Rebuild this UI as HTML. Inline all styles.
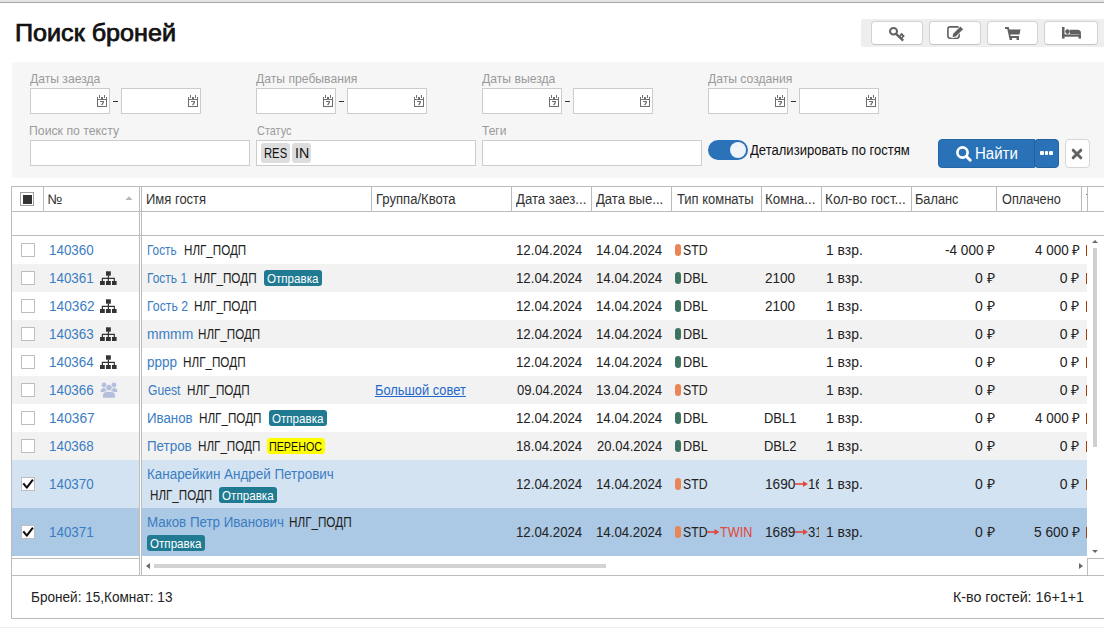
<!DOCTYPE html>
<html><head><meta charset="utf-8"><title>Поиск броней</title><style>
html,body{margin:0;padding:0;}
body{width:1104px;height:628px;overflow:hidden;position:relative;background:#fff;font-family:"Liberation Sans", sans-serif;}
body>div,body>svg{position:absolute;}
.t{white-space:nowrap;}
</style></head>
<body>
<div style="left:0px;top:0px;width:1104px;height:2px;background:#e4e4e4"></div>
<div style="left:0px;top:2px;width:1104px;height:1px;background:#a9a9a9"></div>
<div class="t" style="left:15.41px;top:21.53px;font-size:23px;line-height:23px;color:#111;font-weight:normal;-webkit-text-stroke:0.75px #111;transform:scaleX(1.0931);transform-origin:0 0;">Поиск броней</div>
<div style="left:861px;top:19px;width:243px;height:28px;background:#eeeeee;border-radius:2px 0 0 2px"></div>
<div style="left:871px;top:21px;width:52px;height:24px;background:#fff;border:1px solid #d2d2d2;border-bottom-color:#c4c4c4;border-radius:4px;box-sizing:border-box"></div>
<div style="left:929px;top:21px;width:52px;height:24px;background:#fff;border:1px solid #d2d2d2;border-bottom-color:#c4c4c4;border-radius:4px;box-sizing:border-box"></div>
<div style="left:987px;top:21px;width:51px;height:24px;background:#fff;border:1px solid #d2d2d2;border-bottom-color:#c4c4c4;border-radius:4px;box-sizing:border-box"></div>
<div style="left:1044px;top:21px;width:54px;height:24px;background:#fff;border:1px solid #d2d2d2;border-bottom-color:#c4c4c4;border-radius:4px;box-sizing:border-box"></div>
<svg style="left:887px;top:24px" width="20" height="20" viewBox="0 0 20 20">
<ellipse cx="6.5" cy="7.2" rx="3.5" ry="3.3" fill="none" stroke="#606060" stroke-width="2"/>
<path d="M8.8 9.6 L16.2 16.6" stroke="#606060" stroke-width="2.2"/>
<path d="M13.9 9.4 L17.2 12.6" stroke="#606060" stroke-width="1.8"/><path d="M12.6 12.4 L14.6 10.4 M14.4 14.2 L16.4 12.2" stroke="#606060" stroke-width="1.6"/>
</svg>
<svg style="left:945px;top:24px" width="20" height="18" viewBox="0 0 20 18">
<rect x="2.9" y="2.9" width="11.2" height="11.4" rx="2.2" fill="none" stroke="#606060" stroke-width="1.6"/>
<path d="M6.8 13.8 L7.64 9.84 L15.44 2.04 L18.56 5.16 L10.76 12.96 Z" fill="#606060" stroke="#fff" stroke-width="1"/>
</svg>
<svg style="left:1005px;top:27px" width="16" height="13" viewBox="0 0 16 13">
<path d="M0 1 H3 L5 10 H14" fill="none" stroke="#606060" stroke-width="1.8"/>
<path d="M3.6 2.5 H15.5 L14.5 7.5 H4.6 Z" fill="#606060"/>
<rect x="4.5" y="10" width="2.5" height="3" fill="#606060"/>
<rect x="11.5" y="10" width="2.5" height="3" fill="#606060"/>
</svg>
<svg style="left:1062px;top:27px" width="19" height="12" viewBox="0 0 19 12">
<rect x="0" y="0" width="2.5" height="11.6" fill="#606060"/>
<rect x="0" y="7.4" width="19" height="2.3" fill="#606060"/>
<rect x="16.5" y="7.4" width="2.5" height="4.2" fill="#606060"/>
<circle cx="5.5" cy="4.6" r="2.3" fill="#606060"/>
<path d="M8 2.7 H15.5 Q19 2.7 19 6.2 V6.9 H8 Z" fill="#606060"/>
</svg>
<div style="left:12px;top:62px;width:1092px;height:116px;background:#f6f6f6;border-radius:3px 0 0 3px"></div>
<div class="t" style="left:30.00px;top:72.00px;font-size:13px;line-height:13px;color:#9a9a9a;font-weight:normal;;transform:scaleX(0.9333);transform-origin:0 0;">Даты заезда</div>
<div style="left:30px;top:88px;width:80px;height:26px;background:#fff;border:1px solid #cccccc;box-sizing:border-box"></div>
<svg style="left:97px;top:95px" width="10" height="12" viewBox="0 0 10 12" shape-rendering="crispEdges" fill="#6e6e6e">
<rect x="0" y="2" width="1" height="10"/><rect x="9" y="2" width="1" height="10"/>
<rect x="0" y="4" width="10" height="1"/><rect x="0" y="11" width="10" height="1"/>
<rect x="2" y="0" width="1" height="3"/><rect x="7" y="0" width="1" height="3"/><rect x="4" y="2" width="2" height="2"/>
<rect x="3" y="6" width="4" height="1"/>
</svg><svg style="left:97px;top:95px" width="10" height="12" viewBox="0 0 10 12"><path d="M6.6 7 L4.6 10.2" stroke="#6e6e6e" stroke-width="1.3"/></svg>
<div style="left:121px;top:88px;width:80px;height:26px;background:#fff;border:1px solid #cccccc;box-sizing:border-box"></div>
<svg style="left:188px;top:95px" width="10" height="12" viewBox="0 0 10 12" shape-rendering="crispEdges" fill="#6e6e6e">
<rect x="0" y="2" width="1" height="10"/><rect x="9" y="2" width="1" height="10"/>
<rect x="0" y="4" width="10" height="1"/><rect x="0" y="11" width="10" height="1"/>
<rect x="2" y="0" width="1" height="3"/><rect x="7" y="0" width="1" height="3"/><rect x="4" y="2" width="2" height="2"/>
<rect x="3" y="6" width="4" height="1"/>
</svg><svg style="left:188px;top:95px" width="10" height="12" viewBox="0 0 10 12"><path d="M6.6 7 L4.6 10.2" stroke="#6e6e6e" stroke-width="1.3"/></svg>
<div style="left:113px;top:101px;width:5px;height:1px;background:#333"></div>
<div class="t" style="left:256.40px;top:72.00px;font-size:13px;line-height:13px;color:#9a9a9a;font-weight:normal;;transform:scaleX(0.9352);transform-origin:0 0;">Даты пребывания</div>
<div style="left:256px;top:88px;width:80px;height:26px;background:#fff;border:1px solid #cccccc;box-sizing:border-box"></div>
<svg style="left:323px;top:95px" width="10" height="12" viewBox="0 0 10 12" shape-rendering="crispEdges" fill="#6e6e6e">
<rect x="0" y="2" width="1" height="10"/><rect x="9" y="2" width="1" height="10"/>
<rect x="0" y="4" width="10" height="1"/><rect x="0" y="11" width="10" height="1"/>
<rect x="2" y="0" width="1" height="3"/><rect x="7" y="0" width="1" height="3"/><rect x="4" y="2" width="2" height="2"/>
<rect x="3" y="6" width="4" height="1"/>
</svg><svg style="left:323px;top:95px" width="10" height="12" viewBox="0 0 10 12"><path d="M6.6 7 L4.6 10.2" stroke="#6e6e6e" stroke-width="1.3"/></svg>
<div style="left:347px;top:88px;width:80px;height:26px;background:#fff;border:1px solid #cccccc;box-sizing:border-box"></div>
<svg style="left:414px;top:95px" width="10" height="12" viewBox="0 0 10 12" shape-rendering="crispEdges" fill="#6e6e6e">
<rect x="0" y="2" width="1" height="10"/><rect x="9" y="2" width="1" height="10"/>
<rect x="0" y="4" width="10" height="1"/><rect x="0" y="11" width="10" height="1"/>
<rect x="2" y="0" width="1" height="3"/><rect x="7" y="0" width="1" height="3"/><rect x="4" y="2" width="2" height="2"/>
<rect x="3" y="6" width="4" height="1"/>
</svg><svg style="left:414px;top:95px" width="10" height="12" viewBox="0 0 10 12"><path d="M6.6 7 L4.6 10.2" stroke="#6e6e6e" stroke-width="1.3"/></svg>
<div style="left:339px;top:101px;width:5px;height:1px;background:#333"></div>
<div class="t" style="left:482.40px;top:72.00px;font-size:13px;line-height:13px;color:#9a9a9a;font-weight:normal;;transform:scaleX(0.9359);transform-origin:0 0;">Даты выезда</div>
<div style="left:482px;top:88px;width:80px;height:26px;background:#fff;border:1px solid #cccccc;box-sizing:border-box"></div>
<svg style="left:549px;top:95px" width="10" height="12" viewBox="0 0 10 12" shape-rendering="crispEdges" fill="#6e6e6e">
<rect x="0" y="2" width="1" height="10"/><rect x="9" y="2" width="1" height="10"/>
<rect x="0" y="4" width="10" height="1"/><rect x="0" y="11" width="10" height="1"/>
<rect x="2" y="0" width="1" height="3"/><rect x="7" y="0" width="1" height="3"/><rect x="4" y="2" width="2" height="2"/>
<rect x="3" y="6" width="4" height="1"/>
</svg><svg style="left:549px;top:95px" width="10" height="12" viewBox="0 0 10 12"><path d="M6.6 7 L4.6 10.2" stroke="#6e6e6e" stroke-width="1.3"/></svg>
<div style="left:573px;top:88px;width:80px;height:26px;background:#fff;border:1px solid #cccccc;box-sizing:border-box"></div>
<svg style="left:640px;top:95px" width="10" height="12" viewBox="0 0 10 12" shape-rendering="crispEdges" fill="#6e6e6e">
<rect x="0" y="2" width="1" height="10"/><rect x="9" y="2" width="1" height="10"/>
<rect x="0" y="4" width="10" height="1"/><rect x="0" y="11" width="10" height="1"/>
<rect x="2" y="0" width="1" height="3"/><rect x="7" y="0" width="1" height="3"/><rect x="4" y="2" width="2" height="2"/>
<rect x="3" y="6" width="4" height="1"/>
</svg><svg style="left:640px;top:95px" width="10" height="12" viewBox="0 0 10 12"><path d="M6.6 7 L4.6 10.2" stroke="#6e6e6e" stroke-width="1.3"/></svg>
<div style="left:565px;top:101px;width:5px;height:1px;background:#333"></div>
<div class="t" style="left:708.00px;top:72.00px;font-size:13px;line-height:13px;color:#9a9a9a;font-weight:normal;;transform:scaleX(0.9333);transform-origin:0 0;">Даты создания</div>
<div style="left:708px;top:88px;width:80px;height:26px;background:#fff;border:1px solid #cccccc;box-sizing:border-box"></div>
<svg style="left:775px;top:95px" width="10" height="12" viewBox="0 0 10 12" shape-rendering="crispEdges" fill="#6e6e6e">
<rect x="0" y="2" width="1" height="10"/><rect x="9" y="2" width="1" height="10"/>
<rect x="0" y="4" width="10" height="1"/><rect x="0" y="11" width="10" height="1"/>
<rect x="2" y="0" width="1" height="3"/><rect x="7" y="0" width="1" height="3"/><rect x="4" y="2" width="2" height="2"/>
<rect x="3" y="6" width="4" height="1"/>
</svg><svg style="left:775px;top:95px" width="10" height="12" viewBox="0 0 10 12"><path d="M6.6 7 L4.6 10.2" stroke="#6e6e6e" stroke-width="1.3"/></svg>
<div style="left:799px;top:88px;width:80px;height:26px;background:#fff;border:1px solid #cccccc;box-sizing:border-box"></div>
<svg style="left:866px;top:95px" width="10" height="12" viewBox="0 0 10 12" shape-rendering="crispEdges" fill="#6e6e6e">
<rect x="0" y="2" width="1" height="10"/><rect x="9" y="2" width="1" height="10"/>
<rect x="0" y="4" width="10" height="1"/><rect x="0" y="11" width="10" height="1"/>
<rect x="2" y="0" width="1" height="3"/><rect x="7" y="0" width="1" height="3"/><rect x="4" y="2" width="2" height="2"/>
<rect x="3" y="6" width="4" height="1"/>
</svg><svg style="left:866px;top:95px" width="10" height="12" viewBox="0 0 10 12"><path d="M6.6 7 L4.6 10.2" stroke="#6e6e6e" stroke-width="1.3"/></svg>
<div style="left:791px;top:101px;width:5px;height:1px;background:#333"></div>
<div class="t" style="left:29.06px;top:124.00px;font-size:13px;line-height:13px;color:#9a9a9a;font-weight:normal;;transform:scaleX(0.9432);transform-origin:0 0;">Поиск по тексту</div>
<div style="left:30px;top:140px;width:220px;height:26px;background:#fff;border:1px solid #cccccc;box-sizing:border-box"></div>
<div class="t" style="left:256.60px;top:124.00px;font-size:13px;line-height:13px;color:#9a9a9a;font-weight:normal;;transform:scaleX(0.8390);transform-origin:0 0;">Статус</div>
<div style="left:256px;top:140px;width:220px;height:26px;background:#fff;border:1px solid #cccccc;box-sizing:border-box"></div>
<div class="t" style="left:482.00px;top:124.00px;font-size:13px;line-height:13px;color:#9a9a9a;font-weight:normal;;transform:scaleX(0.9231);transform-origin:0 0;">Теги</div>
<div style="left:482px;top:140px;width:220px;height:26px;background:#fff;border:1px solid #cccccc;box-sizing:border-box"></div>
<div style="left:261px;top:143px;width:29px;height:20px;background:#dddddd;border-radius:3px"></div>
<div style="left:292px;top:143px;width:19px;height:20px;background:#dddddd;border-radius:3px"></div>
<div class="t" style="left:263.70px;top:146.15px;font-size:14px;line-height:14px;color:#111;font-weight:normal;;transform:scaleX(0.8036);transform-origin:0 0;">RES</div>
<div class="t" style="left:294.78px;top:146.15px;font-size:14px;line-height:14px;color:#111;font-weight:normal;;transform:scaleX(1.0167);transform-origin:0 0;">IN</div>
<div style="left:708px;top:140px;width:40px;height:20px;background:#2b72b8;border-radius:10px"></div>
<div style="left:730px;top:142px;width:16px;height:16px;background:#eef4fa;border-radius:50%"></div>
<div class="t" style="left:750.00px;top:143.15px;font-size:14px;line-height:14px;color:#111;font-weight:normal;;transform:scaleX(0.9322);transform-origin:0 0;">Детализировать по гостям</div>
<div style="left:938px;top:139px;width:97px;height:29px;background:#2a72b8;border-radius:4px 0 0 4px;border:1px solid #2566a6;box-sizing:border-box"></div>
<div style="left:1034px;top:139px;width:25px;height:29px;background:#2a72b8;border-radius:4px;border:1px solid #2360a0;box-sizing:border-box"></div>
<svg style="left:956px;top:146px" width="17" height="17" viewBox="0 0 17 17">
<circle cx="6.5" cy="6.5" r="5.1" fill="none" stroke="#fff" stroke-width="2.7"/>
<path d="M10.3 10.3 L14.2 14.2" stroke="#fff" stroke-width="3" stroke-linecap="round"/>
</svg>
<div class="t" style="left:974.76px;top:145.66px;font-size:16px;line-height:16px;color:#fff;font-weight:normal;;transform:scaleX(0.9386);transform-origin:0 0;">Найти</div>
<div style="left:1040.0px;top:151.2px;width:3.8px;height:3.6px;background:#fff;border-radius:1px"></div>
<div style="left:1044.6px;top:151.2px;width:3.8px;height:3.6px;background:#fff;border-radius:1px"></div>
<div style="left:1049.2px;top:151.2px;width:3.8px;height:3.6px;background:#fff;border-radius:1px"></div>
<div style="left:1065px;top:139px;width:25px;height:29px;background:#fff;border:1px solid #d6d6d6;border-radius:4px;box-sizing:border-box"></div>
<svg style="left:1071px;top:148px" width="12" height="12" viewBox="0 0 12 12">
<path d="M2.2 2.2 L9.8 9.8 M9.8 2.2 L2.2 9.8" stroke="#626262" stroke-width="3" stroke-linecap="round"/>
</svg>
<div style="left:11px;top:186px;width:1093px;height:1px;background:#bcbcbc"></div>
<div style="left:11px;top:186px;width:1px;height:433px;background:#bcbcbc"></div>
<div style="left:11px;top:618px;width:1093px;height:1px;background:#bcbcbc"></div>
<div style="left:11px;top:211px;width:1093px;height:1px;background:#bcbcbc"></div>
<div style="left:11px;top:235px;width:1093px;height:1px;background:#bcbcbc"></div>
<div style="left:11px;top:575px;width:1093px;height:1px;background:#bcbcbc"></div>
<div style="left:43px;top:186px;width:1px;height:25px;background:#bcbcbc"></div>
<div style="left:371px;top:186px;width:1px;height:25px;background:#bcbcbc"></div>
<div style="left:511px;top:186px;width:1px;height:25px;background:#bcbcbc"></div>
<div style="left:591px;top:186px;width:1px;height:25px;background:#bcbcbc"></div>
<div style="left:671px;top:186px;width:1px;height:25px;background:#bcbcbc"></div>
<div style="left:761px;top:186px;width:1px;height:25px;background:#bcbcbc"></div>
<div style="left:821px;top:186px;width:1px;height:25px;background:#bcbcbc"></div>
<div style="left:911px;top:186px;width:1px;height:25px;background:#bcbcbc"></div>
<div style="left:996px;top:186px;width:1px;height:25px;background:#bcbcbc"></div>
<div style="left:1081px;top:186px;width:1px;height:25px;background:#bcbcbc"></div>
<div style="left:1087px;top:186px;width:1px;height:25px;background:#bcbcbc"></div>
<div style="left:139px;top:186px;width:1px;height:389px;background:#bcbcbc"></div>
<div style="left:141px;top:186px;width:1px;height:389px;background:#bcbcbc"></div>
<div class="t" style="left:47.50px;top:192.15px;font-size:14px;line-height:14px;color:#333;font-weight:normal;;">№</div>
<div class="t" style="left:145.57px;top:192.15px;font-size:14px;line-height:14px;color:#333;font-weight:normal;;transform:scaleX(0.9286);transform-origin:0 0;">Имя гостя</div>
<div class="t" style="left:375.77px;top:192.15px;font-size:14px;line-height:14px;color:#333;font-weight:normal;;transform:scaleX(0.9341);transform-origin:0 0;">Группа/Квота</div>
<div class="t" style="left:515.80px;top:192.15px;font-size:14px;line-height:14px;color:#333;font-weight:normal;;transform:scaleX(0.9419);transform-origin:0 0;">Дата заез...</div>
<div class="t" style="left:596.20px;top:192.15px;font-size:14px;line-height:14px;color:#333;font-weight:normal;;transform:scaleX(0.9352);transform-origin:0 0;">Дата вые...</div>
<div class="t" style="left:676.80px;top:192.15px;font-size:14px;line-height:14px;color:#333;font-weight:normal;;transform:scaleX(0.9268);transform-origin:0 0;">Тип комнаты</div>
<div class="t" style="left:765.44px;top:192.15px;font-size:14px;line-height:14px;color:#333;font-weight:normal;;transform:scaleX(0.9569);transform-origin:0 0;">Комна...</div>
<div class="t" style="left:825.43px;top:192.15px;font-size:14px;line-height:14px;color:#333;font-weight:normal;;transform:scaleX(0.9683);transform-origin:0 0;">Кол-во гост...</div>
<div class="t" style="left:915.49px;top:192.15px;font-size:14px;line-height:14px;color:#333;font-weight:normal;;transform:scaleX(0.9109);transform-origin:0 0;">Баланс</div>
<div class="t" style="left:1001.50px;top:192.15px;font-size:14px;line-height:14px;color:#333;font-weight:normal;;transform:scaleX(0.9077);transform-origin:0 0;">Оплачено</div>
<svg style="left:125px;top:195.6px" width="8" height="4.4" viewBox="0 0 8 4.4"><path d="M0 4.4 L4 0.3 L8 4.4 Z" fill="#b8b8b8"/></svg>
<div style="left:1086px;top:194px;width:1px;height:1px;background:#b06030"></div>
<div style="left:20px;top:192px;width:14px;height:14px;background:#fff;border:1px solid #a0a0a0;box-sizing:border-box"></div>
<div style="left:22.5px;top:194.5px;width:9px;height:9px;background:#333"></div>
<div style="left:21px;top:243px;width:14px;height:14px;background:#fff;border:1px solid #bdbdbd;box-sizing:border-box"></div>
<div class="t" style="left:49.04px;top:243.15px;font-size:14px;line-height:14px;color:#3a7dc2;font-weight:normal;;transform:scaleX(0.9565);transform-origin:0 0;">140360</div>
<div class="t" style="left:146.76px;top:243.15px;font-size:14px;line-height:14px;color:#3a7dc2;font-weight:normal;;transform:scaleX(0.8412);transform-origin:0 0;">Гость</div>
<div class="t" style="left:183.57px;top:243.15px;font-size:14px;line-height:14px;color:#222;font-weight:normal;;transform:scaleX(0.8301);transform-origin:0 0;">НЛГ_ПОДП</div>
<div class="t" style="left:515.86px;top:243.15px;font-size:14px;line-height:14px;color:#222;font-weight:normal;;transform:scaleX(0.9449);transform-origin:0 0;">12.04.2024</div>
<div class="t" style="left:595.86px;top:243.15px;font-size:14px;line-height:14px;color:#222;font-weight:normal;;transform:scaleX(0.9449);transform-origin:0 0;">14.04.2024</div>
<div style="left:675px;top:244px;width:6px;height:12px;background:#ea8558;border-radius:3px"></div>
<div class="t" style="left:682.93px;top:243.15px;font-size:14px;line-height:14px;color:#222;font-weight:normal;;transform:scaleX(0.8741);transform-origin:0 0;">STD</div>
<div class="t" style="left:826.01px;top:243.15px;font-size:14px;line-height:14px;color:#222;font-weight:normal;;transform:scaleX(0.9914);transform-origin:0 0;">1 взр.</div>
<div class="t" style="left:944.67px;top:243.15px;font-size:14px;line-height:14px;color:#222;font-weight:normal;;transform:scaleX(0.9692);transform-origin:0 0;">-4 000 ₽</div>
<div class="t" style="left:1034.66px;top:243.15px;font-size:14px;line-height:14px;color:#222;font-weight:normal;;transform:scaleX(0.9596);transform-origin:0 0;">4 000 ₽</div>
<div style="left:1085.6px;top:245px;width:1.4px;height:10.5px;background:#a2400c"></div>
<div style="left:12px;top:264px;width:127px;height:28px;background:#f2f2f2"></div>
<div style="left:142px;top:264px;width:945px;height:28px;background:#f2f2f2"></div>
<div style="left:21px;top:271px;width:14px;height:14px;background:#fff;border:1px solid #bdbdbd;box-sizing:border-box"></div>
<div class="t" style="left:49.04px;top:271.15px;font-size:14px;line-height:14px;color:#3a7dc2;font-weight:normal;;transform:scaleX(0.9565);transform-origin:0 0;">140361</div>
<svg style="left:100px;top:271px" width="17" height="15" viewBox="0 0 17 15">
<rect x="6" y="0.3" width="4.8" height="4.4" fill="#333"/>
<path d="M8.4 4.5 V10 M2.4 10 V7.3 H14.3 V10" fill="none" stroke="#333" stroke-width="1.2"/>
<rect x="0" y="10" width="4.8" height="4" fill="#333"/>
<rect x="6" y="10" width="4.8" height="4" fill="#333"/>
<rect x="12" y="10" width="4.6" height="4" fill="#333"/>
</svg>
<div class="t" style="left:146.74px;top:271.15px;font-size:14px;line-height:14px;color:#3a7dc2;font-weight:normal;;transform:scaleX(0.8565);transform-origin:0 0;">Гость 1</div>
<div class="t" style="left:194.16px;top:271.15px;font-size:14px;line-height:14px;color:#222;font-weight:normal;;transform:scaleX(0.8356);transform-origin:0 0;">НЛГ_ПОДП</div>
<div style="left:264px;top:270px;width:57.69999999999999px;height:16px;background:#1f7a92;border-radius:3px"></div>
<div class="t" style="left:267.00px;top:272.00px;font-size:13px;line-height:13px;color:#fff;font-weight:normal;;transform:scaleX(0.8914);transform-origin:0 0;">Отправка</div>
<div class="t" style="left:515.86px;top:271.15px;font-size:14px;line-height:14px;color:#222;font-weight:normal;;transform:scaleX(0.9449);transform-origin:0 0;">12.04.2024</div>
<div class="t" style="left:595.86px;top:271.15px;font-size:14px;line-height:14px;color:#222;font-weight:normal;;transform:scaleX(0.9449);transform-origin:0 0;">14.04.2024</div>
<div style="left:675px;top:272px;width:6px;height:12px;background:#3b7462;border-radius:3px"></div>
<div class="t" style="left:682.89px;top:271.15px;font-size:14px;line-height:14px;color:#222;font-weight:normal;;transform:scaleX(0.9077);transform-origin:0 0;">DBL</div>
<div class="t" style="left:765.30px;top:271.15px;font-size:14px;line-height:14px;color:#222;font-weight:normal;;transform:scaleX(0.9677);transform-origin:0 0;">2100</div>
<div class="t" style="left:826.01px;top:271.15px;font-size:14px;line-height:14px;color:#222;font-weight:normal;;transform:scaleX(0.9914);transform-origin:0 0;">1 взр.</div>
<div class="t" style="left:975.10px;top:271.15px;font-size:14px;line-height:14px;color:#222;font-weight:normal;;">0 ₽</div>
<div class="t" style="left:1059.80px;top:271.15px;font-size:14px;line-height:14px;color:#222;font-weight:normal;;">0 ₽</div>
<div style="left:1085.6px;top:273px;width:1.4px;height:10.5px;background:#a2400c"></div>
<div style="left:21px;top:299px;width:14px;height:14px;background:#fff;border:1px solid #bdbdbd;box-sizing:border-box"></div>
<div class="t" style="left:49.02px;top:299.15px;font-size:14px;line-height:14px;color:#3a7dc2;font-weight:normal;;transform:scaleX(0.9778);transform-origin:0 0;">140362</div>
<svg style="left:100px;top:299px" width="17" height="15" viewBox="0 0 17 15">
<rect x="6" y="0.3" width="4.8" height="4.4" fill="#333"/>
<path d="M8.4 4.5 V10 M2.4 10 V7.3 H14.3 V10" fill="none" stroke="#333" stroke-width="1.2"/>
<rect x="0" y="10" width="4.8" height="4" fill="#333"/>
<rect x="6" y="10" width="4.8" height="4" fill="#333"/>
<rect x="12" y="10" width="4.6" height="4" fill="#333"/>
</svg>
<div class="t" style="left:146.72px;top:299.15px;font-size:14px;line-height:14px;color:#3a7dc2;font-weight:normal;;transform:scaleX(0.8756);transform-origin:0 0;">Гость 2</div>
<div class="t" style="left:194.16px;top:299.15px;font-size:14px;line-height:14px;color:#222;font-weight:normal;;transform:scaleX(0.8356);transform-origin:0 0;">НЛГ_ПОДП</div>
<div class="t" style="left:515.86px;top:299.15px;font-size:14px;line-height:14px;color:#222;font-weight:normal;;transform:scaleX(0.9449);transform-origin:0 0;">12.04.2024</div>
<div class="t" style="left:595.86px;top:299.15px;font-size:14px;line-height:14px;color:#222;font-weight:normal;;transform:scaleX(0.9449);transform-origin:0 0;">14.04.2024</div>
<div style="left:675px;top:300px;width:6px;height:12px;background:#3b7462;border-radius:3px"></div>
<div class="t" style="left:682.89px;top:299.15px;font-size:14px;line-height:14px;color:#222;font-weight:normal;;transform:scaleX(0.9077);transform-origin:0 0;">DBL</div>
<div class="t" style="left:765.30px;top:299.15px;font-size:14px;line-height:14px;color:#222;font-weight:normal;;transform:scaleX(0.9677);transform-origin:0 0;">2100</div>
<div class="t" style="left:826.01px;top:299.15px;font-size:14px;line-height:14px;color:#222;font-weight:normal;;transform:scaleX(0.9914);transform-origin:0 0;">1 взр.</div>
<div class="t" style="left:975.10px;top:299.15px;font-size:14px;line-height:14px;color:#222;font-weight:normal;;">0 ₽</div>
<div class="t" style="left:1059.80px;top:299.15px;font-size:14px;line-height:14px;color:#222;font-weight:normal;;">0 ₽</div>
<div style="left:1085.6px;top:301px;width:1.4px;height:10.5px;background:#a2400c"></div>
<div style="left:12px;top:320px;width:127px;height:28px;background:#f2f2f2"></div>
<div style="left:142px;top:320px;width:945px;height:28px;background:#f2f2f2"></div>
<div style="left:21px;top:327px;width:14px;height:14px;background:#fff;border:1px solid #bdbdbd;box-sizing:border-box"></div>
<div class="t" style="left:49.04px;top:327.15px;font-size:14px;line-height:14px;color:#3a7dc2;font-weight:normal;;transform:scaleX(0.9565);transform-origin:0 0;">140363</div>
<svg style="left:100px;top:327px" width="17" height="15" viewBox="0 0 17 15">
<rect x="6" y="0.3" width="4.8" height="4.4" fill="#333"/>
<path d="M8.4 4.5 V10 M2.4 10 V7.3 H14.3 V10" fill="none" stroke="#333" stroke-width="1.2"/>
<rect x="0" y="10" width="4.8" height="4" fill="#333"/>
<rect x="6" y="10" width="4.8" height="4" fill="#333"/>
<rect x="12" y="10" width="4.6" height="4" fill="#333"/>
</svg>
<div class="t" style="left:146.71px;top:327.15px;font-size:14px;line-height:14px;color:#3a7dc2;font-weight:normal;;transform:scaleX(0.9911);transform-origin:0 0;">mmmm</div>
<div class="t" style="left:198.47px;top:327.15px;font-size:14px;line-height:14px;color:#222;font-weight:normal;;transform:scaleX(0.8315);transform-origin:0 0;">НЛГ_ПОДП</div>
<div class="t" style="left:515.86px;top:327.15px;font-size:14px;line-height:14px;color:#222;font-weight:normal;;transform:scaleX(0.9449);transform-origin:0 0;">12.04.2024</div>
<div class="t" style="left:595.86px;top:327.15px;font-size:14px;line-height:14px;color:#222;font-weight:normal;;transform:scaleX(0.9449);transform-origin:0 0;">14.04.2024</div>
<div style="left:675px;top:328px;width:6px;height:12px;background:#3b7462;border-radius:3px"></div>
<div class="t" style="left:682.89px;top:327.15px;font-size:14px;line-height:14px;color:#222;font-weight:normal;;transform:scaleX(0.9077);transform-origin:0 0;">DBL</div>
<div class="t" style="left:826.01px;top:327.15px;font-size:14px;line-height:14px;color:#222;font-weight:normal;;transform:scaleX(0.9914);transform-origin:0 0;">1 взр.</div>
<div class="t" style="left:975.10px;top:327.15px;font-size:14px;line-height:14px;color:#222;font-weight:normal;;">0 ₽</div>
<div class="t" style="left:1059.80px;top:327.15px;font-size:14px;line-height:14px;color:#222;font-weight:normal;;">0 ₽</div>
<div style="left:1085.6px;top:329px;width:1.4px;height:10.5px;background:#a2400c"></div>
<div style="left:21px;top:355px;width:14px;height:14px;background:#fff;border:1px solid #bdbdbd;box-sizing:border-box"></div>
<div class="t" style="left:49.04px;top:355.15px;font-size:14px;line-height:14px;color:#3a7dc2;font-weight:normal;;transform:scaleX(0.9565);transform-origin:0 0;">140364</div>
<svg style="left:100px;top:355px" width="17" height="15" viewBox="0 0 17 15">
<rect x="6" y="0.3" width="4.8" height="4.4" fill="#333"/>
<path d="M8.4 4.5 V10 M2.4 10 V7.3 H14.3 V10" fill="none" stroke="#333" stroke-width="1.2"/>
<rect x="0" y="10" width="4.8" height="4" fill="#333"/>
<rect x="6" y="10" width="4.8" height="4" fill="#333"/>
<rect x="12" y="10" width="4.6" height="4" fill="#333"/>
</svg>
<div class="t" style="left:146.73px;top:355.15px;font-size:14px;line-height:14px;color:#3a7dc2;font-weight:normal;;transform:scaleX(0.9667);transform-origin:0 0;">pppp</div>
<div class="t" style="left:183.46px;top:355.15px;font-size:14px;line-height:14px;color:#222;font-weight:normal;;transform:scaleX(0.8356);transform-origin:0 0;">НЛГ_ПОДП</div>
<div class="t" style="left:515.86px;top:355.15px;font-size:14px;line-height:14px;color:#222;font-weight:normal;;transform:scaleX(0.9449);transform-origin:0 0;">12.04.2024</div>
<div class="t" style="left:595.86px;top:355.15px;font-size:14px;line-height:14px;color:#222;font-weight:normal;;transform:scaleX(0.9449);transform-origin:0 0;">14.04.2024</div>
<div style="left:675px;top:356px;width:6px;height:12px;background:#3b7462;border-radius:3px"></div>
<div class="t" style="left:682.89px;top:355.15px;font-size:14px;line-height:14px;color:#222;font-weight:normal;;transform:scaleX(0.9077);transform-origin:0 0;">DBL</div>
<div class="t" style="left:826.01px;top:355.15px;font-size:14px;line-height:14px;color:#222;font-weight:normal;;transform:scaleX(0.9914);transform-origin:0 0;">1 взр.</div>
<div class="t" style="left:975.10px;top:355.15px;font-size:14px;line-height:14px;color:#222;font-weight:normal;;">0 ₽</div>
<div class="t" style="left:1059.80px;top:355.15px;font-size:14px;line-height:14px;color:#222;font-weight:normal;;">0 ₽</div>
<div style="left:1085.6px;top:357px;width:1.4px;height:10.5px;background:#a2400c"></div>
<div style="left:12px;top:376px;width:127px;height:28px;background:#f2f2f2"></div>
<div style="left:142px;top:376px;width:945px;height:28px;background:#f2f2f2"></div>
<div style="left:21px;top:383px;width:14px;height:14px;background:#fff;border:1px solid #bdbdbd;box-sizing:border-box"></div>
<div class="t" style="left:49.04px;top:383.15px;font-size:14px;line-height:14px;color:#3a7dc2;font-weight:normal;;transform:scaleX(0.9565);transform-origin:0 0;">140366</div>
<svg style="left:100px;top:382px" width="18" height="16" viewBox="0 0 18 16">
<circle cx="4" cy="3" r="2.4" fill="#b3bfdc"/>
<circle cx="14" cy="3" r="2.4" fill="#b3bfdc"/>
<path d="M0.5 10 Q0.5 6 4 6 Q7 6 7 10 Z" fill="#b3bfdc"/>
<path d="M11 10 Q11 6 14 6 Q17.5 6 17.5 10 Z" fill="#b3bfdc"/>
<path d="M2.6 16.2 V13 Q2.6 9.3 9 9.3 Q15.4 9.3 15.4 13 V16.2 Z" fill="#b3bfdc" stroke="#f2f2f2" stroke-width="0.9"/>
<circle cx="9" cy="5.6" r="3.3" fill="#b3bfdc" stroke="#f2f2f2" stroke-width="0.9"/>
</svg>
<div class="t" style="left:147.70px;top:383.15px;font-size:14px;line-height:14px;color:#3a7dc2;font-weight:normal;;transform:scaleX(0.8684);transform-origin:0 0;">Guest</div>
<div class="t" style="left:187.46px;top:383.15px;font-size:14px;line-height:14px;color:#222;font-weight:normal;;transform:scaleX(0.8356);transform-origin:0 0;">НЛГ_ПОДП</div>
<div class="t" style="left:375.30px;top:383.15px;font-size:14px;line-height:14px;color:#1f68d0;font-weight:normal;text-decoration:underline;transform:scaleX(0.9192);transform-origin:0 0;">Большой совет</div>
<div class="t" style="left:516.80px;top:383.15px;font-size:14px;line-height:14px;color:#222;font-weight:normal;;transform:scaleX(0.9314);transform-origin:0 0;">09.04.2024</div>
<div class="t" style="left:595.86px;top:383.15px;font-size:14px;line-height:14px;color:#222;font-weight:normal;;transform:scaleX(0.9449);transform-origin:0 0;">13.04.2024</div>
<div style="left:675px;top:384px;width:6px;height:12px;background:#ea8558;border-radius:3px"></div>
<div class="t" style="left:682.93px;top:383.15px;font-size:14px;line-height:14px;color:#222;font-weight:normal;;transform:scaleX(0.8741);transform-origin:0 0;">STD</div>
<div class="t" style="left:826.01px;top:383.15px;font-size:14px;line-height:14px;color:#222;font-weight:normal;;transform:scaleX(0.9914);transform-origin:0 0;">1 взр.</div>
<div class="t" style="left:975.10px;top:383.15px;font-size:14px;line-height:14px;color:#222;font-weight:normal;;">0 ₽</div>
<div class="t" style="left:1059.80px;top:383.15px;font-size:14px;line-height:14px;color:#222;font-weight:normal;;">0 ₽</div>
<div style="left:1085.6px;top:385px;width:1.4px;height:10.5px;background:#a2400c"></div>
<div style="left:21px;top:411px;width:14px;height:14px;background:#fff;border:1px solid #bdbdbd;box-sizing:border-box"></div>
<div class="t" style="left:49.02px;top:411.15px;font-size:14px;line-height:14px;color:#3a7dc2;font-weight:normal;;transform:scaleX(0.9778);transform-origin:0 0;">140367</div>
<div class="t" style="left:146.75px;top:411.15px;font-size:14px;line-height:14px;color:#3a7dc2;font-weight:normal;;transform:scaleX(0.9489);transform-origin:0 0;">Иванов</div>
<div class="t" style="left:199.47px;top:411.15px;font-size:14px;line-height:14px;color:#222;font-weight:normal;;transform:scaleX(0.8342);transform-origin:0 0;">НЛГ_ПОДП</div>
<div style="left:269.1px;top:410px;width:57.69999999999999px;height:16px;background:#1f7a92;border-radius:3px"></div>
<div class="t" style="left:272.10px;top:412.00px;font-size:13px;line-height:13px;color:#fff;font-weight:normal;;transform:scaleX(0.8914);transform-origin:0 0;">Отправка</div>
<div class="t" style="left:515.86px;top:411.15px;font-size:14px;line-height:14px;color:#222;font-weight:normal;;transform:scaleX(0.9449);transform-origin:0 0;">12.04.2024</div>
<div class="t" style="left:595.86px;top:411.15px;font-size:14px;line-height:14px;color:#222;font-weight:normal;;transform:scaleX(0.9449);transform-origin:0 0;">14.04.2024</div>
<div style="left:675px;top:412px;width:6px;height:12px;background:#3b7462;border-radius:3px"></div>
<div class="t" style="left:682.89px;top:411.15px;font-size:14px;line-height:14px;color:#222;font-weight:normal;;transform:scaleX(0.9077);transform-origin:0 0;">DBL</div>
<div class="t" style="left:764.38px;top:411.15px;font-size:14px;line-height:14px;color:#222;font-weight:normal;;transform:scaleX(0.9235);transform-origin:0 0;">DBL1</div>
<div class="t" style="left:826.01px;top:411.15px;font-size:14px;line-height:14px;color:#222;font-weight:normal;;transform:scaleX(0.9914);transform-origin:0 0;">1 взр.</div>
<div class="t" style="left:975.10px;top:411.15px;font-size:14px;line-height:14px;color:#222;font-weight:normal;;">0 ₽</div>
<div class="t" style="left:1034.66px;top:411.15px;font-size:14px;line-height:14px;color:#222;font-weight:normal;;transform:scaleX(0.9596);transform-origin:0 0;">4 000 ₽</div>
<div style="left:1085.6px;top:413px;width:1.4px;height:10.5px;background:#a2400c"></div>
<div style="left:12px;top:432px;width:127px;height:28px;background:#f2f2f2"></div>
<div style="left:142px;top:432px;width:945px;height:28px;background:#f2f2f2"></div>
<div style="left:21px;top:439px;width:14px;height:14px;background:#fff;border:1px solid #bdbdbd;box-sizing:border-box"></div>
<div class="t" style="left:49.04px;top:439.15px;font-size:14px;line-height:14px;color:#3a7dc2;font-weight:normal;;transform:scaleX(0.9565);transform-origin:0 0;">140368</div>
<div class="t" style="left:146.74px;top:439.15px;font-size:14px;line-height:14px;color:#3a7dc2;font-weight:normal;;transform:scaleX(0.9556);transform-origin:0 0;">Петров</div>
<div class="t" style="left:197.77px;top:439.15px;font-size:14px;line-height:14px;color:#222;font-weight:normal;;transform:scaleX(0.8329);transform-origin:0 0;">НЛГ_ПОДП</div>
<div style="left:267px;top:438px;width:58px;height:16px;background:#ffff00;border-radius:3px"></div>
<div class="t" style="left:269.17px;top:440.00px;font-size:13px;line-height:13px;color:#111;font-weight:normal;;transform:scaleX(0.8254);transform-origin:0 0;">ПЕРЕНОС</div>
<div class="t" style="left:515.86px;top:439.15px;font-size:14px;line-height:14px;color:#222;font-weight:normal;;transform:scaleX(0.9449);transform-origin:0 0;">18.04.2024</div>
<div class="t" style="left:596.80px;top:439.15px;font-size:14px;line-height:14px;color:#222;font-weight:normal;;transform:scaleX(0.9314);transform-origin:0 0;">20.04.2024</div>
<div style="left:675px;top:440px;width:6px;height:12px;background:#3b7462;border-radius:3px"></div>
<div class="t" style="left:682.89px;top:439.15px;font-size:14px;line-height:14px;color:#222;font-weight:normal;;transform:scaleX(0.9077);transform-origin:0 0;">DBL</div>
<div class="t" style="left:764.38px;top:439.15px;font-size:14px;line-height:14px;color:#222;font-weight:normal;;transform:scaleX(0.9235);transform-origin:0 0;">DBL2</div>
<div class="t" style="left:826.01px;top:439.15px;font-size:14px;line-height:14px;color:#222;font-weight:normal;;transform:scaleX(0.9914);transform-origin:0 0;">1 взр.</div>
<div class="t" style="left:975.10px;top:439.15px;font-size:14px;line-height:14px;color:#222;font-weight:normal;;">0 ₽</div>
<div class="t" style="left:1059.80px;top:439.15px;font-size:14px;line-height:14px;color:#222;font-weight:normal;;">0 ₽</div>
<div style="left:1085.6px;top:441px;width:1.4px;height:10.5px;background:#a2400c"></div>
<div style="left:12px;top:460px;width:127px;height:48px;background:#d4e3f1"></div>
<div style="left:142px;top:460px;width:945px;height:48px;background:#d4e3f1"></div>
<div style="left:21px;top:477px;width:14px;height:14px;background:#fff;border:1px solid #bdbdbd;box-sizing:border-box"></div>
<svg style="left:22px;top:478px" width="12" height="12" viewBox="0 0 12 12">
<path d="M1.3 5.4 L4.8 9.7 L10.9 1.7" fill="none" stroke="#111" stroke-width="2.1" stroke-linejoin="round"/>
</svg>
<div style="left:1085.6px;top:479px;width:1.4px;height:10.5px;background:#a2400c"></div>
<div style="left:12px;top:508px;width:127px;height:48px;background:#abc8e4"></div>
<div style="left:142px;top:508px;width:945px;height:48px;background:#abc8e4"></div>
<div style="left:21px;top:525px;width:14px;height:14px;background:#fff;border:1px solid #bdbdbd;box-sizing:border-box"></div>
<svg style="left:22px;top:526px" width="12" height="12" viewBox="0 0 12 12">
<path d="M1.3 5.4 L4.8 9.7 L10.9 1.7" fill="none" stroke="#111" stroke-width="2.1" stroke-linejoin="round"/>
</svg>
<div style="left:1085.6px;top:527px;width:1.4px;height:10.5px;background:#a2400c"></div>
<div class="t" style="left:49.04px;top:477.15px;font-size:14px;line-height:14px;color:#3a7dc2;font-weight:normal;;transform:scaleX(0.9565);transform-origin:0 0;">140370</div>
<div class="t" style="left:146.74px;top:467.15px;font-size:14px;line-height:14px;color:#3a7dc2;font-weight:normal;;transform:scaleX(0.9585);transform-origin:0 0;">Канарейкин Андрей Петрович</div>
<div class="t" style="left:149.57px;top:488.15px;font-size:14px;line-height:14px;color:#222;font-weight:normal;;transform:scaleX(0.8301);transform-origin:0 0;">НЛГ_ПОДП</div>
<div style="left:219px;top:487px;width:58px;height:16px;background:#1f7a92;border-radius:3px"></div>
<div class="t" style="left:222.00px;top:489.00px;font-size:13px;line-height:13px;color:#fff;font-weight:normal;;transform:scaleX(0.8966);transform-origin:0 0;">Отправка</div>
<div class="t" style="left:515.86px;top:477.15px;font-size:14px;line-height:14px;color:#222;font-weight:normal;;transform:scaleX(0.9449);transform-origin:0 0;">12.04.2024</div>
<div class="t" style="left:595.86px;top:477.15px;font-size:14px;line-height:14px;color:#222;font-weight:normal;;transform:scaleX(0.9449);transform-origin:0 0;">14.04.2024</div>
<div style="left:675px;top:478px;width:6px;height:12px;background:#ea8558;border-radius:3px"></div>
<div class="t" style="left:682.93px;top:477.15px;font-size:14px;line-height:14px;color:#222;font-weight:normal;;transform:scaleX(0.8741);transform-origin:0 0;">STD</div>
<div class="t" style="left:764.52px;top:477.15px;font-size:14px;line-height:14px;color:#222;font-weight:normal;;transform:scaleX(0.9767);transform-origin:0 0;">1690</div>
<svg style="left:795px;top:481px" width="13" height="6" viewBox="0 0 13 6"><path d="M0 3 H9" stroke="#e5473a" stroke-width="1.6"/><path d="M8 0 L13 3 L8 6 Z" fill="#e5473a"/></svg>
<div style="left:808px;top:477.15px;width:11px;height:16px;overflow:hidden"><div class="t" style="left:0;top:0;position:absolute;font-size:14px;line-height:14px;color:#222;transform:scaleX(0.94);transform-origin:0 0">16</div></div>
<div class="t" style="left:826.01px;top:477.15px;font-size:14px;line-height:14px;color:#222;font-weight:normal;;transform:scaleX(0.9914);transform-origin:0 0;">1 взр.</div>
<div class="t" style="left:975.10px;top:477.15px;font-size:14px;line-height:14px;color:#222;font-weight:normal;;">0 ₽</div>
<div class="t" style="left:1059.80px;top:477.15px;font-size:14px;line-height:14px;color:#222;font-weight:normal;;">0 ₽</div>
<div class="t" style="left:49.04px;top:525.15px;font-size:14px;line-height:14px;color:#3a7dc2;font-weight:normal;;transform:scaleX(0.9565);transform-origin:0 0;">140371</div>
<div class="t" style="left:146.75px;top:515.15px;font-size:14px;line-height:14px;color:#3a7dc2;font-weight:normal;;transform:scaleX(0.9535);transform-origin:0 0;">Маков Петр Иванович</div>
<div class="t" style="left:289.16px;top:515.15px;font-size:14px;line-height:14px;color:#222;font-weight:normal;;transform:scaleX(0.8356);transform-origin:0 0;">НЛГ_ПОДП</div>
<div style="left:147px;top:535px;width:57.80000000000001px;height:16px;background:#1f7a92;border-radius:3px"></div>
<div class="t" style="left:150.00px;top:537.00px;font-size:13px;line-height:13px;color:#fff;font-weight:normal;;transform:scaleX(0.8931);transform-origin:0 0;">Отправка</div>
<div class="t" style="left:515.86px;top:525.15px;font-size:14px;line-height:14px;color:#222;font-weight:normal;;transform:scaleX(0.9449);transform-origin:0 0;">12.04.2024</div>
<div class="t" style="left:595.86px;top:525.15px;font-size:14px;line-height:14px;color:#222;font-weight:normal;;transform:scaleX(0.9449);transform-origin:0 0;">14.04.2024</div>
<div style="left:675px;top:526px;width:6px;height:12px;background:#ea8558;border-radius:3px"></div>
<div class="t" style="left:682.93px;top:525.15px;font-size:14px;line-height:14px;color:#222;font-weight:normal;;transform:scaleX(0.8741);transform-origin:0 0;">STD</div>
<svg style="left:706.5px;top:529px" width="12.5" height="6" viewBox="0 0 12.5 6"><path d="M0 3 H8.5" stroke="#e5473a" stroke-width="1.6"/><path d="M7.5 0 L12.5 3 L7.5 6 Z" fill="#e5473a"/></svg>
<div class="t" style="left:719.50px;top:525.15px;font-size:14px;line-height:14px;color:#e5473a;font-weight:normal;;transform:scaleX(0.9057);transform-origin:0 0;">TWIN</div>
<div class="t" style="left:764.52px;top:525.15px;font-size:14px;line-height:14px;color:#222;font-weight:normal;;transform:scaleX(0.9767);transform-origin:0 0;">1689</div>
<svg style="left:795px;top:529px" width="13" height="6" viewBox="0 0 13 6"><path d="M0 3 H9" stroke="#e5473a" stroke-width="1.6"/><path d="M8 0 L13 3 L8 6 Z" fill="#e5473a"/></svg>
<div style="left:808px;top:525.15px;width:11px;height:16px;overflow:hidden"><div class="t" style="left:0;top:0;position:absolute;font-size:14px;line-height:14px;color:#222;transform:scaleX(0.94);transform-origin:0 0">31</div></div>
<div class="t" style="left:826.01px;top:525.15px;font-size:14px;line-height:14px;color:#222;font-weight:normal;;transform:scaleX(0.9914);transform-origin:0 0;">1 взр.</div>
<div class="t" style="left:975.10px;top:525.15px;font-size:14px;line-height:14px;color:#222;font-weight:normal;;">0 ₽</div>
<div class="t" style="left:1033.70px;top:525.15px;font-size:14px;line-height:14px;color:#222;font-weight:normal;;transform:scaleX(0.9804);transform-origin:0 0;">5 600 ₽</div>
<svg style="left:1092px;top:240px" width="6" height="3" viewBox="0 0 6 3"><path d="M0 3 L3 0 L6 3 Z" fill="#6a6a6a"/></svg>
<div style="left:1093px;top:248px;width:4px;height:199px;background:#cfcfcf"></div>
<svg style="left:1092px;top:550px" width="6" height="3" viewBox="0 0 6 3"><path d="M0 0 L3 3 L6 0 Z" fill="#6a6a6a"/></svg>
<div style="left:12px;top:558px;width:127px;height:1px;background:#bcbcbc"></div>
<svg style="left:146px;top:563px" width="4" height="6" viewBox="0 0 4 6"><path d="M4 0 L0 3 L4 6 Z" fill="#6a6a6a"/></svg>
<div style="left:154px;top:564px;width:452px;height:4px;background:#d4d2d4"></div>
<svg style="left:1079px;top:563px" width="4" height="6" viewBox="0 0 4 6"><path d="M0 0 L4 3 L0 6 Z" fill="#6a6a6a"/></svg>
<div style="left:1087px;top:558px;width:17px;height:1px;background:#bcbcbc"></div>
<div style="left:1087px;top:558px;width:1px;height:17px;background:#bcbcbc"></div>
<div class="t" style="left:30.73px;top:590.15px;font-size:14px;line-height:14px;color:#222;font-weight:normal;;transform:scaleX(0.9697);transform-origin:0 0;">Броней: 15,Комнат: 13</div>
<div class="t" style="left:953.30px;top:590.15px;font-size:14px;line-height:14px;color:#222;font-weight:normal;;transform:scaleX(1.0189);transform-origin:0 0;">К-во гостей: 16+1+1</div>
<div style="left:0px;top:627px;width:1104px;height:1px;background:#efefef"></div>
</body></html>
